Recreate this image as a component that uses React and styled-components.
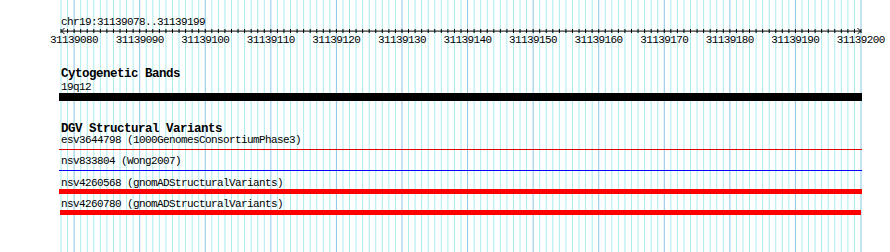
import React from 'react';
import styled, { createGlobalStyle } from 'styled-components';

const START = 31139078;
const END = 31139200;
const BASES = END - START;
const VIEW_LEFT = 61;
const VIEW_WIDTH = 800;
const PX = VIEW_WIDTH / BASES;

const Global = createGlobalStyle`
  html, body { margin: 0; padding: 0; background: #fff; overflow: hidden; }
  body { font-family: "Liberation Mono", "DejaVu Sans Mono", monospace; color: #000; }
`;

const Page = styled.div`
  position: relative;
  width: 890px;
  height: 252px;
  overflow: hidden;
`;

const GridLayer = styled.svg`
  position: absolute;
  left: 0;
  top: 0;
  width: 890px;
  height: 252px;
  display: block;
  z-index: 0;
`;

const Content = styled.div`
  position: relative;
  z-index: 1;
  display: flex;
  flex-direction: column;
  padding-left: ${VIEW_LEFT}px;
  width: ${VIEW_WIDTH}px;
`;

const Ruler = styled.div`
  display: flex;
  flex-direction: column;
  padding-top: 16px;
`;

const RefName = styled.div`
  font-size: 11px;
  letter-spacing: -0.6px;
  line-height: 12px;
  height: 12px;
  white-space: nowrap;
`;

const Axis = styled.svg`
  display: block;
  width: ${VIEW_WIDTH}px;
  height: 6px;
  margin-top: 0.4px;
  overflow: visible;
`;

const TickLabels = styled.div`
  display: flex;
  margin-left: ${2 * PX - 5 * PX}px;
  white-space: nowrap;
`;

const TickLabel = styled.div`
  flex: 0 0 ${10 * PX}px;
  text-align: center;
  font-size: 11px;
  letter-spacing: -0.6px;
  line-height: 12px;
  height: 12px;
`;

const Track = styled.section`
  display: flex;
  flex-direction: column;
  margin-top: ${(p) => p.$gap}px;
`;

const TrackTitle = styled.div`
  font-weight: bold;
  font-size: 12.5px;
  letter-spacing: -0.5px;
  line-height: 12px;
  height: 12px;
  white-space: nowrap;
`;

const BandLabel = styled.div`
  font-size: 11px;
  letter-spacing: -0.6px;
  line-height: 10px;
  height: 10px;
  margin-top: 2.3px;
  white-space: nowrap;
`;

const Features = styled.div`
  display: flex;
  flex-direction: column;
  gap: 4.4px;
  margin-top: ${(p) => p.$gap}px;
`;

const Feature = styled.div`
  display: flex;
  flex-direction: column;
`;

const FeatureLabel = styled.div`
  font-size: 11px;
  letter-spacing: -0.6px;
  line-height: 11px;
  height: 11px;
  white-space: nowrap;
`;

const Band = styled.div`
  height: 7.6px;
  margin-top: 0.7px;
  margin-left: -2px;
  width: 803px;
  background: #000;
`;

const ThinGlyph = styled.div`
  height: 1px;
  margin: 2.8px 0 2.2px ${(p) => p.$left}px;
  width: ${(p) => p.$width}px;
  background: ${(p) => p.$color};
`;

const BarGlyph = styled.div`
  height: 5.5px;
  margin-left: ${(p) => p.$left}px;
  width: ${(p) => p.$width}px;
  background: ${(p) => p.$color};
`;

const features = [
  { name: 'esv3644798', source: '1000GenomesConsortiumPhase3', kind: 'thin', color: '#e00000', left: -2, width: 803 },
  { name: 'nsv833804', source: 'Wong2007', kind: 'thin', color: '#0000ff', left: -2, width: 803 },
  { name: 'nsv4260568', source: 'gnomADStructuralVariants', kind: 'bar', color: '#ff0000', left: -2, width: 803 },
  { name: 'nsv4260780', source: 'gnomADStructuralVariants', kind: 'bar', color: '#ff0000', left: -1, width: 801 },
];

function Grid() {
  const lines = [];
  for (let i = 0; i <= BASES; i++) {
    const major = (START + i) % 10 === 0;
    lines.push(
      <rect
        key={i}
        x={VIEW_LEFT + i * PX - 0.5}
        y={0}
        width={1}
        height={252}
        fill={major ? '#8cc6e6' : '#aaecef'}
      />
    );
  }
  return (
    <GridLayer viewBox="0 0 890 252" aria-hidden="true">
      {lines}
    </GridLayer>
  );
}

function AxisDrawing() {
  const ticks = [];
  for (let i = 0; i <= BASES; i++) {
    const x = i * PX;
    ticks.push(<line key={i} x1={x} x2={x} y1={1} y2={5} stroke="#000" strokeWidth={1} />);
  }
  return (
    <Axis viewBox={`0 0 ${VIEW_WIDTH} 6`}>
      <line x1={0} x2={VIEW_WIDTH} y1={3.1} y2={3.1} stroke="#000" strokeWidth={1} />
      {ticks}
      <path d="M3.5,0 L0.5,3.1 L3.5,6.2" fill="none" stroke="#000" strokeWidth={1} />
      <path d={`M${VIEW_WIDTH - 3.5},0 L${VIEW_WIDTH - 0.5},3.1 L${VIEW_WIDTH - 3.5},6.2`} fill="none" stroke="#000" strokeWidth={1} />
    </Axis>
  );
}

export default function App() {
  const labels = [];
  for (let v = 31139080; v <= 31139200; v += 10) labels.push(v);
  return (
    <Page>
      <Global />
      <Grid />
      <Content>
        <Ruler>
          <RefName>chr19:31139078..31139199</RefName>
          <AxisDrawing />
          <TickLabels>
            {labels.map((v) => (
              <TickLabel key={v}>{v}</TickLabel>
            ))}
          </TickLabels>
        </Ruler>
        <Track $gap={21.6}>
          <TrackTitle>Cytogenetic Bands</TrackTitle>
          <BandLabel>19q12</BandLabel>
          <Band />
        </Track>
        <Track $gap={22.1}>
          <TrackTitle>DGV Structural Variants</TrackTitle>
          <Features $gap={0.4}>
            {features.map((f) => (
              <Feature key={f.name}>
                <FeatureLabel>{`${f.name} (${f.source})`}</FeatureLabel>
                {f.kind === 'thin' ? (
                  <ThinGlyph $color={f.color} $left={f.left} $width={f.width} />
                ) : (
                  <BarGlyph $color={f.color} $left={f.left} $width={f.width} />
                )}
              </Feature>
            ))}
          </Features>
        </Track>
      </Content>
    </Page>
  );
}
